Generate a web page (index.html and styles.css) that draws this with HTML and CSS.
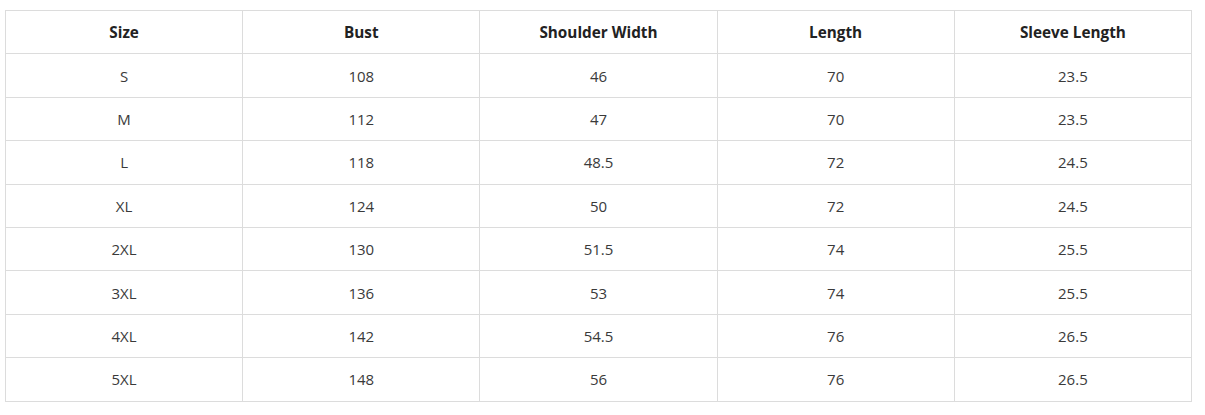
FILE: index.html
```html
<!DOCTYPE html>
<html>
<head>
<meta charset="utf-8">
<link rel="stylesheet" href="styles.css">
</head>
<body>
<table class="size-table">
  <thead>
    <tr><th>Size</th><th>Bust</th><th>Shoulder Width</th><th>Length</th><th>Sleeve Length</th></tr>
  </thead>
  <tbody>
    <tr><td>S</td><td>108</td><td>46</td><td>70</td><td>23.5</td></tr>
    <tr><td>M</td><td>112</td><td>47</td><td>70</td><td>23.5</td></tr>
    <tr><td>L</td><td>118</td><td>48.5</td><td>72</td><td>24.5</td></tr>
    <tr><td>XL</td><td>124</td><td>50</td><td>72</td><td>24.5</td></tr>
    <tr><td>2XL</td><td>130</td><td>51.5</td><td>74</td><td>25.5</td></tr>
    <tr><td>3XL</td><td>136</td><td>53</td><td>74</td><td>25.5</td></tr>
    <tr><td>4XL</td><td>142</td><td>54.5</td><td>76</td><td>26.5</td></tr>
    <tr><td>5XL</td><td>148</td><td>56</td><td>76</td><td>26.5</td></tr>
  </tbody>
</table>
</body>
</html>
```
FILE: styles.css
```css
html, body {
  margin: 0;
  padding: 0;
  background: #fff;
}
body {
  font-family: "Open Sans", "Noto Sans", sans-serif;
  font-size: 15px;
  color: #3a3a3a;
}
.size-table {
  margin: 10px 0 0 5px;
  width: 1187px;
  border-collapse: collapse;
  table-layout: fixed;
}
.size-table th,
.size-table td {
  border: 1px solid #dcdcdc;
  text-align: center;
  vertical-align: middle;
  padding: 0;
  height: 42.4px;
  line-height: 20px;
}
.size-table th {
  font-weight: 700;
  color: #222;
  font-size: 15.3px;
}
```
